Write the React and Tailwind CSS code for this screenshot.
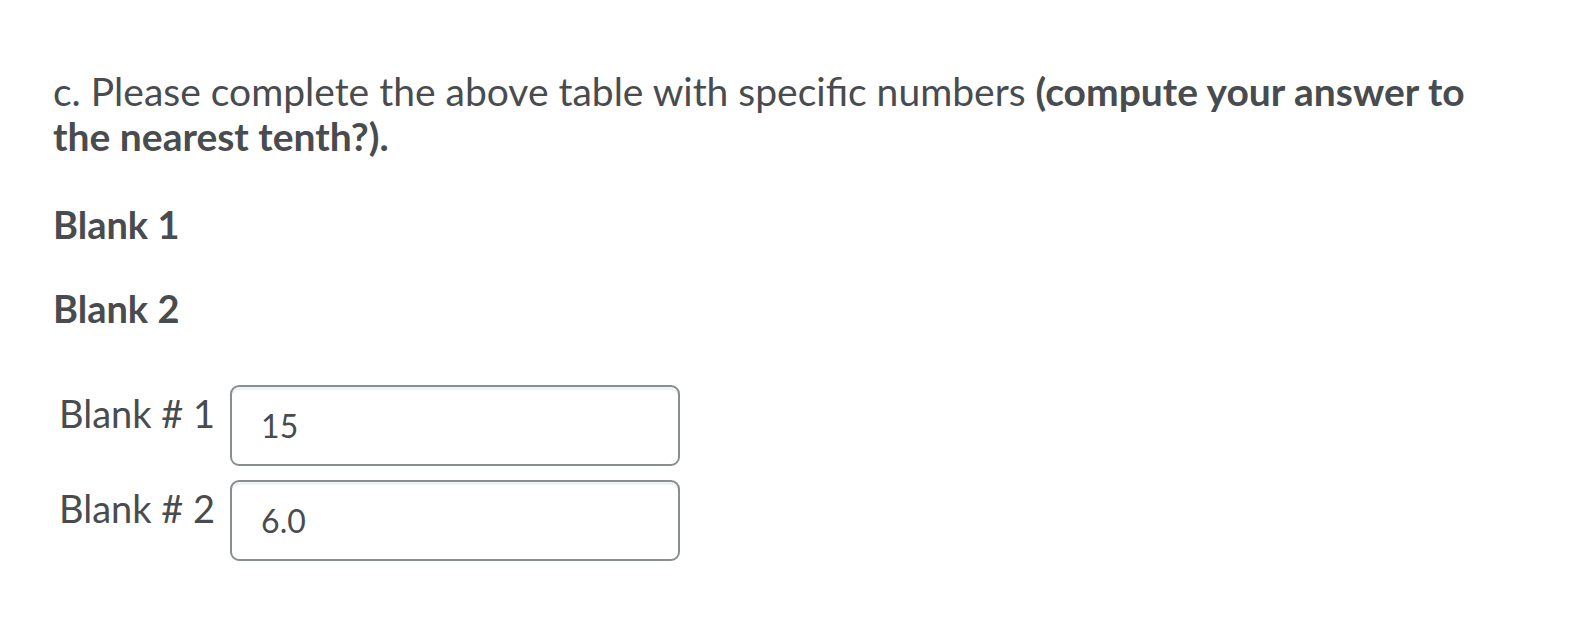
import React from 'react';

const App = () => {
	return (
		<div className="min-h-[622px] bg-white text-[#494c4e]" style={{ fontFamily: 'Lato, "Noto Sans", sans-serif' }}>
			<div className="pl-[53px] pt-[69px]">
				<p className="w-[1430px] text-[39px] leading-[45px]">
					c. Please complete the above table with specific numbers <strong className="font-bold">(compute your answer to the nearest tenth?).</strong>
				</p>
				<p className="mt-[43px] text-[38px] leading-[45px] font-bold">Blank 1</p>
				<p className="mt-[39px] text-[38px] leading-[45px] font-bold">Blank 2</p>
			</div>
			<div className="mt-[54px] pl-[59px] flex flex-col gap-[14px]">
				<div className="flex items-start gap-[15px]">
					<label className="pt-[6px] text-[38px] leading-[45px]">Blank # 1</label>
					<input
						readOnly
						value="15"
						className="w-[450px] h-[81px] rounded-[9px] border-2 border-[#898e91] bg-white pl-[29px] pr-4 text-[32px] text-[#494c4e] shadow-[inset_0_3px_0_#f1f2f3] outline-none"
					/>
				</div>
				<div className="flex items-start gap-[15px]">
					<label className="pt-[6px] text-[38px] leading-[45px]">Blank # 2</label>
					<input
						readOnly
						value="6.0"
						className="w-[450px] h-[81px] rounded-[9px] border-2 border-[#898e91] bg-white pl-[29px] pr-4 text-[32px] text-[#494c4e] shadow-[inset_0_3px_0_#f1f2f3] outline-none"
					/>
				</div>
			</div>
		</div>
	);
};

export default App;
